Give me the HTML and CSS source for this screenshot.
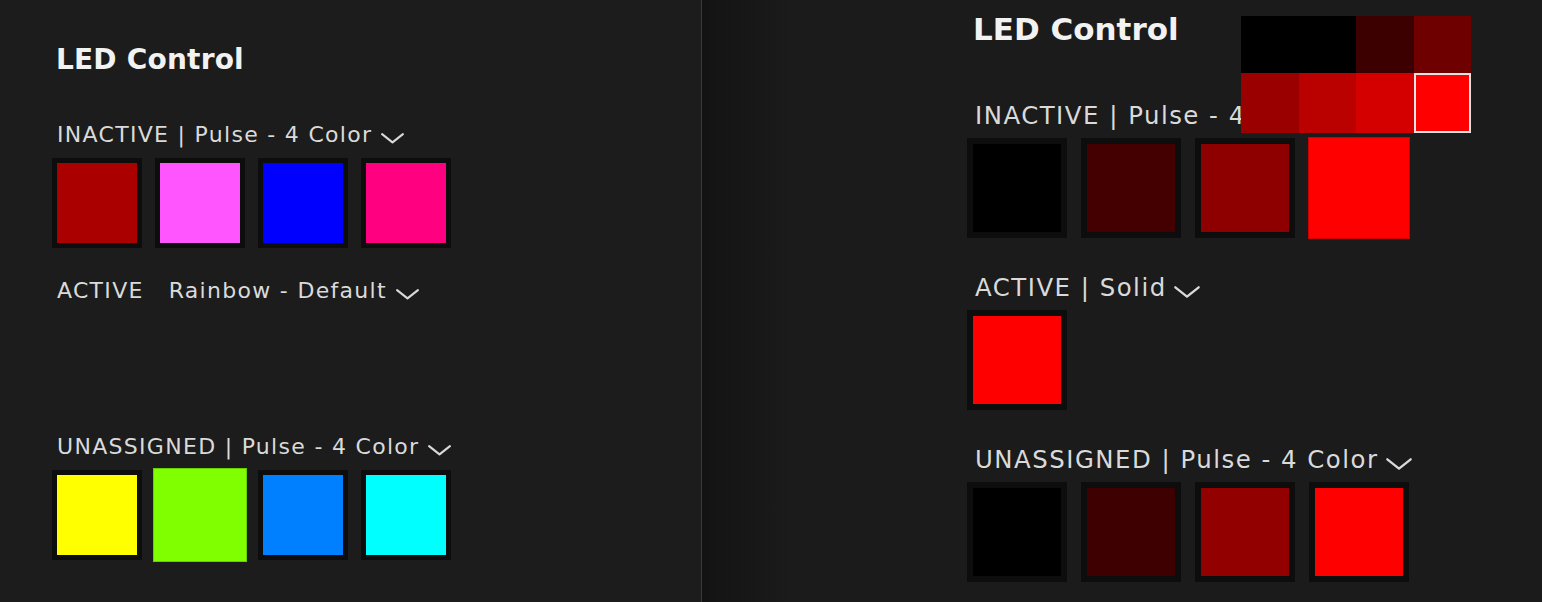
FILE: index.html
```html
<!DOCTYPE html>
<html lang="en">
<head>
<meta charset="utf-8">
<title>LED Control</title>
<link rel="stylesheet" href="styles.css">
</head>
<body>
<div class="page">
  <section class="panel panel-left">
    <h1 class="title">LED Control</h1>
    <div class="group">
      <div class="label">INACTIVE | Pulse - 4 Color<svg class="chev" viewBox="0 0 24 12"><path d="M2 2 L12 10 L22 2"/></svg></div>
      <div class="swatches">
        <div class="swatch" style="--c:#aa0000"></div>
        <div class="swatch" style="--c:#ff55ff"></div>
        <div class="swatch" style="--c:#0000ff"></div>
        <div class="swatch" style="--c:#ff0080"></div>
      </div>
    </div>
    <div class="group">
      <div class="label"><span>ACTIVE</span><span class="mode">Rainbow - Default</span><svg class="chev" viewBox="0 0 24 12"><path d="M2 2 L12 10 L22 2"/></svg></div>
      <div class="swatches"></div>
    </div>
    <div class="group">
      <div class="label">UNASSIGNED | Pulse - 4 Color<svg class="chev" viewBox="0 0 24 12"><path d="M2 2 L12 10 L22 2"/></svg></div>
      <div class="swatches">
        <div class="swatch" style="--c:#ffff00"></div>
        <div class="swatch selected" style="--c:#80ff00"></div>
        <div class="swatch" style="--c:#0080ff"></div>
        <div class="swatch" style="--c:#00ffff"></div>
      </div>
    </div>
  </section>

  <section class="panel panel-right">
    <h1 class="title">LED Control</h1>
    <div class="group">
      <div class="label">INACTIVE | Pulse - 4 Color<svg class="chev" viewBox="0 0 24 12"><path d="M2 2 L12 10 L22 2"/></svg></div>
      <div class="swatches">
        <div class="swatch" style="--c:#000000"></div>
        <div class="swatch" style="--c:#440000"></div>
        <div class="swatch" style="--c:#8e0000"></div>
        <div class="swatch selected" style="--c:#ff0000"></div>
      </div>
    </div>
    <div class="group">
      <div class="label">ACTIVE | Solid<svg class="chev" viewBox="0 0 24 12"><path d="M2 2 L12 10 L22 2"/></svg></div>
      <div class="swatches">
        <div class="swatch" style="--c:#ff0000"></div>
      </div>
    </div>
    <div class="group">
      <div class="label">UNASSIGNED | Pulse - 4 Color<svg class="chev" viewBox="0 0 24 12"><path d="M2 2 L12 10 L22 2"/></svg></div>
      <div class="swatches">
        <div class="swatch" style="--c:#000000"></div>
        <div class="swatch" style="--c:#3e0000"></div>
        <div class="swatch" style="--c:#930000"></div>
        <div class="swatch" style="--c:#ff0000"></div>
      </div>
    </div>

    <div class="palette">
      <div class="cell" style="--c:#000000"></div>
      <div class="cell" style="--c:#000000"></div>
      <div class="cell" style="--c:#3d0000"></div>
      <div class="cell" style="--c:#6e0000"></div>
      <div class="cell" style="--c:#9a0000"></div>
      <div class="cell" style="--c:#bb0000"></div>
      <div class="cell" style="--c:#d40000"></div>
      <div class="cell picked" style="--c:#ff0000"></div>
    </div>
  </section>
</div>
</body>
</html>
```

FILE: styles.css
```css
* { box-sizing: border-box; }

html, body {
  margin: 0;
  padding: 0;
}

body {
  background: #1c1c1c;
  font-family: "DejaVu Sans", "Noto Sans", sans-serif;
  overflow: hidden;
}

.page {
  display: flex;
  width: 1542px;
  height: 602px;
}

.panel-left {
  width: 701px;
  padding: 44px 0 0 52px;
}

.panel-right {
  flex: 1;
  position: relative;
  border-left: 1px solid #3a3a3a;
  background: linear-gradient(to right, #131313 0, #1b1b1b 90px);
  padding: 11px 0 0 265px;
}

.title {
  margin: 0;
  font-weight: bold;
  color: #f2f2f2;
}

.panel-left .title {
  font-size: 28px;
  line-height: 32px;
  letter-spacing: 0.2px;
  margin: 0 0 46px 4px;
}

.panel-right .title {
  font-size: 31px;
  line-height: 36px;
  margin: 0 0 54px 6px;
}

.label {
  color: #dadada;
  white-space: nowrap;
}

.panel-left .label {
  font-size: 22px;
  line-height: 26px;
  letter-spacing: 1.3px;
  margin-left: 5px;
}

.panel-right .label {
  font-size: 24.4px;
  line-height: 29px;
  letter-spacing: 1.5px;
  margin-left: 8px;
}

.mode {
  margin-left: 25px;
}

.chev {
  fill: none;
  stroke: #dadada;
  stroke-width: 2;
  stroke-linecap: round;
  stroke-linejoin: round;
}

.panel-left .chev {
  width: 25px;
  height: 12.5px;
  margin-left: 8px;
  vertical-align: -2px;
}

.panel-right .chev {
  width: 28px;
  height: 14px;
  margin-left: 6px;
  vertical-align: -3px;
}

.swatches {
  display: flex;
}

.panel-left .swatches {
  gap: 13px;
  height: 90px;
  margin-top: 10px;
}

.panel-right .swatches {
  gap: 14px;
  height: 100px;
  margin-top: 8px;
}

.panel-left .group + .group { margin-top: 30px; }
.panel-right .group + .group { margin-top: 35px; }

.swatch {
  flex: none;
  background: var(--c);
  border: 5px solid #0d0d0d;
}

.panel-left .swatch { width: 90px; height: 90px; }
.panel-right .swatch { width: 100px; height: 100px; border-width: 6px; }

.swatch.selected {
  border: none;
  box-shadow: inset 0 0 0 1px rgba(0, 0, 0, 0.18);
}

.panel-left .swatch.selected {
  width: 94px;
  height: 94px;
  margin: -2px;
}

.panel-right .swatch.selected {
  width: 102px;
  height: 102px;
  margin: -1px;
}

.palette {
  position: absolute;
  left: 539px;
  top: 16px;
  z-index: 2;
  display: grid;
  grid-template-columns: repeat(4, 57.5px);
  grid-template-rows: 57px 60px;
}

.cell {
  background: var(--c);
}

.cell.picked {
  border: 2px solid #e4e4e4;
}
```
